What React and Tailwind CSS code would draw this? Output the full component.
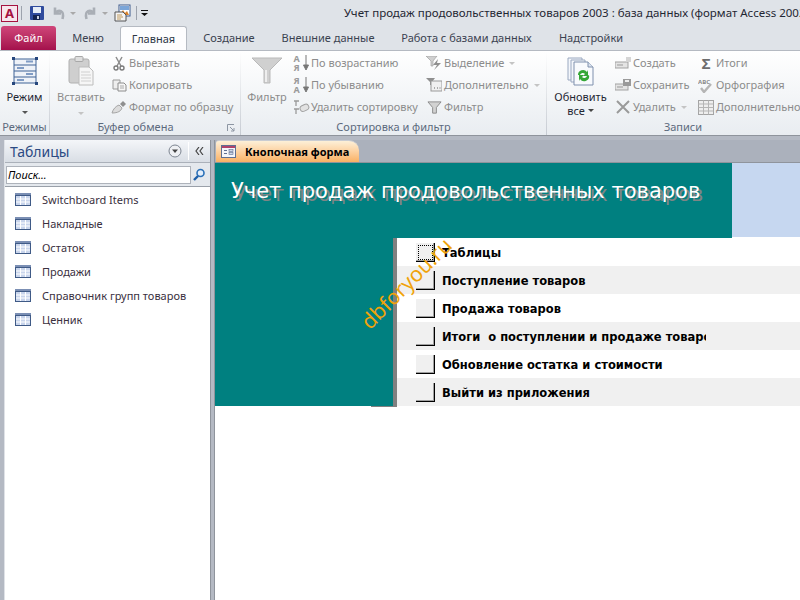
import React from "react";

const Table = () => (
  <svg width="16" height="13" viewBox="0 0 16 13" className="shrink-0">
    <rect x="0" y="0" width="16" height="13" fill="#3f5a86" />
    <rect x="1" y="3" width="14" height="9" fill="#c9d5ec" />
    <path d="M1 6h14M1 9h14M5.5 3v9M10.5 3v9" stroke="#fff" strokeWidth="1" />
    <rect x="0" y="0" width="16" height="2" fill="#7b8fb4" />
  </svg>
);

const Dropdown = ({ c = "#a9a9a9" }) => (
  <svg width="6" height="3" viewBox="0 0 6 3" className="shrink-0 block"><path d="M0 0h6L3 3z" fill={c} /></svg>
);

const Small = ({ icon, label, arrow }) => (
  <div className="h-[22px] flex items-center whitespace-nowrap">
    <span className="w-[18px] h-[16px] flex items-center justify-center shrink-0">{icon}</span>
    <span className="ml-[1px] text-[#8c8c8c]">{label}</span>
    {arrow && <span className="ml-[5px]"><Dropdown c="#c4c4c4" /></span>}
  </div>
);

const Funnel = ({ s = 16, c = "#a8a8a8" }) => (
  <svg width={s} height={s} viewBox="0 0 16 16"><path d="M1 2h14L10 8v6H6V8z" fill="#d2d2d2" stroke={c} strokeWidth="1" /></svg>
);

const SortAZ = ({ down }) => (
  <span className="relative w-[15px] h-[16px] block">
    <span className="absolute left-0 top-[-1px] text-[9px] leading-[9px] text-[#9a9a9a] font-bold">{down ? "Я" : "А"}<br />{down ? "А" : "Я"}</span>
    <svg width="6" height="16" viewBox="0 0 6 16" className="absolute right-0 top-0"><path d="M3 0v12M0.5 10L3 15l2.500-5z" stroke="#777" fill="#777" strokeWidth="1" /></svg>
  </span>
);

const GroupLabel = ({ children, dlg, extra = "" }) => (
  <div className={`h-[15px] mt-auto relative text-center text-[#5c6a7d] whitespace-nowrap ${extra}`}>
    {children}
    {dlg && (
      <svg width="8" height="8" viewBox="0 0 8 8" className="absolute right-[5px] top-[4px]">
        <path d="M0.500 7V.5H7" fill="none" stroke="#8d96a3" /><path d="M3 3l4 4M4 7h3V4" fill="none" stroke="#8d96a3" />
      </svg>
    )}
  </div>
);

const Tab = ({ children, w }) => (
  <div className={`flex items-center justify-center text-[#3b4250] ${w}`}>{children}</div>
);

const Sep = () => <div className="w-[1px] h-[85px] bg-gradient-to-b from-[#ffffff] to-[#c6cbd2] shrink-0" />;

const Btn = () => (
  <div className="w-[19px] h-[19px] bg-[#f0f0f0] border-r border-b border-r-black border-b-black shadow-[inset_-1px_-1px_0_#a0a0a0]" />
);

const rows = [
  "Таблицы",
  "Поступление товаров",
  "Продажа товаров",
  "Итоги  о поступлении и продаже товаров",
  "Обновление остатка и стоимости",
  "Выйти из приложения",
];

const navItems = ["Switchboard Items", "Накладные", "Остаток", "Продажи", "Справочник групп товаров", "Ценник"];

export default function App() {
  return (
    <div className="w-[800px] h-[600px] overflow-hidden flex flex-col bg-[#b4b9c3] text-[11px] leading-[14px] text-[#3b4250] relative" style={{ fontFamily: '"Noto Sans", sans-serif' }}>
      {/* title bar */}
      <div className="h-[26px] bg-[#dfe3e8] flex items-center shrink-0 whitespace-nowrap overflow-hidden">
        <div className="ml-[1px] w-[17px] h-[17px] shrink-0 border border-[#a5123f] bg-[#f7e6ec] flex items-center justify-center font-bold text-[13px] text-[#a5123f]" >A</div>
        <div className="ml-[3px] w-[1px] h-[14px] bg-[#9da3ad] shrink-0" />
        <svg width="16" height="16" viewBox="0 0 16 16" className="ml-[7px] shrink-0">
          <rect x="1" y="1" width="14" height="14" rx="1" fill="#2f4b9d" />
          <rect x="4" y="2" width="8" height="6" fill="#e6edf7" />
          <rect x="4" y="10" width="7" height="5" fill="#14234f" />
          <rect x="8" y="11" width="2" height="3" fill="#c8d0e0" />
        </svg>
        <svg width="14" height="14" viewBox="0 0 14 14" className="ml-[7px] shrink-0"><path d="M3 1.500v6h6M3.500 7C6 3 13 4 10.500 13" fill="none" stroke="#a9aeb5" strokeWidth="2.6" /></svg>
        <span className="ml-[4px] shrink-0"><Dropdown /></span>
        <svg width="14" height="14" viewBox="0 0 14 14" className="ml-[7px] shrink-0"><path d="M11 1.500v6H5M10.500 7C8 3 1 4 3.500 13" fill="none" stroke="#a9aeb5" strokeWidth="2.6" /></svg>
        <span className="ml-[5px] shrink-0"><Dropdown /></span>
        <svg width="17" height="18" viewBox="0 0 17 18" className="ml-[6px] shrink-0">
          <rect x="5" y="1" width="11" height="11" fill="#fff" stroke="#3c5a8c" />
          <path d="M6 11l3-5 2 3 2-2 2 4z" fill="#d9822b" /><rect x="6" y="2" width="9" height="4" fill="#7aa5d8" />
          <path d="M1 8h8l3 3v6H1z" fill="#f4f4f4" stroke="#555" />
          <path d="M3 11h5M3 13h6M3 15h4" stroke="#c09a5c" />
        </svg>
        <div className="ml-[5px] w-[1px] h-[14px] bg-[#9da3ad] shrink-0" />
        <svg width="7" height="6" viewBox="0 0 7 6" className="ml-[4px] shrink-0"><path d="M0 0h7v1H0zM0 3h7L3.500 6z" fill="#111" /></svg>
        <div className="ml-[196px] shrink-0 text-[11.5px] text-[#1f2733]">Учет продаж продовольственных товаров 2003 : база данных (формат Access 2002 - 2003)</div>
      </div>
      {/* tabs */}
      <div className="h-[24px] bg-[#dfe3e8] flex shrink-0 pl-[1px] whitespace-nowrap">
        <div className="w-[55px] bg-gradient-to-b from-[#d0457a] to-[#a40f4c] rounded-t-[3px] flex items-center justify-center text-white">Файл</div>
        <Tab w="w-[64px]">Меню</Tab>
        <div className="w-[67px] h-[24px] bg-[#fdfdfe] border border-b-0 border-[#b5bac2] rounded-t-[3px] flex items-center justify-center text-[#2c3644]">Главная</div>
        <Tab w="w-[84px]">Создание</Tab>
        <Tab w="w-[114px]">Внешние данные</Tab>
        <Tab w="w-[163px]">Работа с базами данных</Tab>
        <Tab w="w-[86px]">Надстройки</Tab>
      </div>
      {/* ribbon */}
      <div className="h-[86px] shrink-0 flex bg-gradient-to-b from-[#ffffff] to-[#e9edf1] border-t border-t-[#b5bac2] border-b border-b-[#8f949c] whitespace-nowrap overflow-hidden">
        {/* Режимы */}
        <div className="w-[49px] flex flex-col shrink-0">
          <div className="flex flex-col items-center pt-[6px]">
            <svg width="26" height="28" viewBox="0 0 26 28">
              <rect x="2" y="2" width="22" height="24" fill="#eef2f8" stroke="#3f6296" />
              <path d="M2 8h22M2 14h22M2 20h22" stroke="#3f6296" />
              <path d="M14 4.500h7M5 11h7M14 17h7M5 23h7" stroke="#7f9bc4" strokeWidth="2" />
              <g fill="#27477d"><rect x="0" y="0" width="3" height="3" /><rect x="23" y="0" width="3" height="3" /><rect x="0" y="25" width="3" height="3" /><rect x="23" y="25" width="3" height="3" /></g>
            </svg>
            <div className="mt-[5px] text-[#1f2733]">Режим</div>
            <div className="mt-[7px]"><Dropdown c="#555" /></div>
          </div>
          <GroupLabel>Режимы</GroupLabel>
        </div>
        <Sep />
        {/* Буфер обмена */}
        <div className="w-[190px] flex flex-col shrink-0">
          <div className="flex">
            <div className="w-[60px] pl-[2px] flex flex-col items-center pt-[5px] text-[#8c8c8c] shrink-0">
              <svg width="26" height="30" viewBox="0 0 26 30">
                <rect x="1" y="3" width="20" height="24" rx="2" fill="#cfcfcf" stroke="#b0b0b0" />
                <rect x="7" y="0.5" width="8" height="5" rx="1" fill="#dedede" stroke="#a8a8a8" />
                <path d="M11 11h10l4 4v14H11z" fill="#f6f6f6" stroke="#bcbcbc" />
                <path d="M13 16h9M13 19h10M13 22h10M13 25h10" stroke="#d0d0d0" />
              </svg>
              <div className="mt-[4px]">Вставить</div>
              <div className="mt-[8px]"><Dropdown c="#c4c4c4" /></div>
            </div>
            <div className="pt-[1px]">
              <Small label="Вырезать" icon={<svg width="12" height="15" viewBox="0 0 12 15"><path d="M3 1l5 9M9 1L4 10" stroke="#8d8d8d" strokeWidth="1.5" /><circle cx="3" cy="12" r="2" fill="none" stroke="#7a7a7a" strokeWidth="1.4" /><circle cx="9" cy="12" r="2" fill="none" stroke="#7a7a7a" strokeWidth="1.4" /></svg>} />
              <Small label="Копировать" icon={<svg width="15" height="13" viewBox="0 0 15 13"><path d="M1 1h7v9H1z" fill="#eee" stroke="#9a9a9a" /><path d="M6 4h6l2 2v6H6z" fill="#f6f6f6" stroke="#8c8c8c" /><path d="M8 7h4M8 9h4" stroke="#aaa" /></svg>} />
              <Small label="Формат по образцу" icon={<svg width="16" height="14" viewBox="0 0 16 14"><path d="M1 13C2 9 5 6 8 5l3 3c-1 3-4 5-10 5z" fill="#dcdcdc" stroke="#a5a5a5" /><path d="M9 4l3-3 3 3-3 3z" fill="#8f8f8f" /></svg>} />
            </div>
          </div>
          <GroupLabel dlg extra="pr-[19px]">Буфер обмена</GroupLabel>
        </div>
        <Sep />
        {/* Сортировка и фильтр */}
        <div className="w-[305px] flex flex-col shrink-0">
          <div className="flex">
            <div className="w-[50px] pl-[2px] flex flex-col items-center pt-[6px] text-[#8c8c8c] shrink-0">
              <svg width="34" height="27" viewBox="0 0 32 27"><path d="M1 1h30L19 13v13h-6V13z" fill="#d0d0d0" stroke="#b9b9b9" /><path d="M15 13v12" stroke="#eee" strokeWidth="2" /></svg>
              <div className="mt-[6px]">Фильтр</div>
            </div>
            <div className="w-[134px] pl-[1px] pt-[1px] shrink-0">
              <Small label="По возрастанию" icon={<SortAZ />} />
              <Small label="По убыванию" icon={<SortAZ down />} />
              <Small label="Удалить сортировку" icon={<svg width="17" height="15" viewBox="0 0 17 15"><path d="M1 1h5M1 9h5M3 1v5M3 9v5" stroke="#9a9a9a" strokeWidth="1.3" /><rect x="7" y="5" width="9" height="6" rx="3" transform="rotate(-25 11 8)" fill="#e2e2e2" stroke="#a0a0a0" /></svg>} />
            </div>
            <div className="pt-[1px]">
              <Small arrow label="Выделение" icon={<svg width="16" height="14" viewBox="0 0 16 14"><path d="M0 0h11L7 5v5H5V5z" fill="#d0d0d0" stroke="#a0a0a0" strokeWidth=".7" /><path d="M12 3L7 9h4l-3 5 7-7h-4z" fill="#8f8f8f" /></svg>} />
              <Small arrow label="Дополнительно" icon={<svg width="16" height="14" viewBox="0 0 16 14"><path d="M0 0h9L6 4v3H4V4z" fill="#8f8f8f" /><rect x="5" y="3" width="11" height="10" fill="#f0f0f0" stroke="#9a9a9a" /><path d="M8 10h1M11 10h1M13.500 10h1" stroke="#666" /></svg>} />
              <Small label="Фильтр" icon={<Funnel s={15} c="#8a8a8a" />} />
            </div>
          </div>
          <GroupLabel>Сортировка и фильтр</GroupLabel>
        </div>
        <Sep />
        {/* Записи */}
        <div className="flex-1 flex flex-col min-w-0">
          <div className="flex">
            <div className="w-[67px] flex flex-col items-center pt-[6px] text-[#1f2733] shrink-0 leading-[13px]">
              <svg width="28" height="29" viewBox="0 0 28 29">
                <path d="M1 1h14v22H1z" fill="#f3f6fb" stroke="#9aa8c0" />
                <path d="M4 3h14v22H4z" fill="#f3f6fb" stroke="#9aa8c0" />
                <path d="M7 5h14l5 5v18H7z" fill="#f8fafd" stroke="#7e90ad" />
                <path d="M21 5v5h5" fill="#dbe3ef" stroke="#7e90ad" />
                <path d="M11 18a5 5 0 0 1 9-3l1-2v6h-5l2-2a3 3 0 0 0-5 1z" fill="#35a737" />
                <path d="M22 18a5 5 0 0 1-9 4l-1 2v-6h5l-2 2a3 3 0 0 0 5-1z" fill="#35a737" />
              </svg>
              <div className="mt-[4px]">Обновить</div>
              <div className="mt-[1px] flex items-center gap-[3px]">все <Dropdown c="#444" /></div>
            </div>
            <div className="w-[83px] pt-[1px] shrink-0">
              <Small label="Создать" icon={<svg width="16" height="12" viewBox="0 0 16 12"><rect x="0" y="5" width="13" height="6" fill="#e4e4e4" stroke="#a2a2a2" /><path d="M2 8h6" stroke="#999" /><path d="M11 0h5v5h-5z" fill="#d5d5d5" /></svg>} />
              <Small label="Сохранить" icon={<svg width="16" height="12" viewBox="0 0 16 12"><rect x="0" y="5" width="13" height="6" fill="#e4e4e4" stroke="#a2a2a2" /><path d="M2 8h6" stroke="#999" /><rect x="8" y="0" width="8" height="7" fill="#9a9a9a" /><rect x="10" y="1" width="4" height="2" fill="#eee" /></svg>} />
              <Small arrow label="Удалить" icon={<svg width="14" height="14" viewBox="0 0 14 14"><path d="M1 1l12 12M13 1L1 13" stroke="#9a9a9a" strokeWidth="2" /></svg>} />
            </div>
            <div className="pt-[1px]">
              <Small label="Итоги" icon={<span className="text-[15px] font-bold text-[#6d6d6d] leading-[15px]">Σ</span>} />
              <Small label="Орфография" icon={<svg width="16" height="15" viewBox="0 0 16 15"><text x="0" y="6" fontSize="6" fontWeight="700" fill="#8a8a8a">ABC</text><path d="M3 10l3 4 7-8" fill="none" stroke="#b5b5b5" strokeWidth="2.4" /></svg>} />
              <Small label="Дополнительно" icon={<svg width="16" height="15" viewBox="0 0 16 15"><rect x=".5" y=".5" width="15" height="14" fill="#eee" stroke="#a4a4a4" /><path d="M.5 4h15M.5 7.500h15M.5 11h15M5.500 .5v14M10.500 .5v14" stroke="#b5b5b5" /></svg>} />
            </div>
          </div>
          <GroupLabel extra="pl-[19px]">Записи</GroupLabel>
        </div>
      </div>
      {/* body */}
      <div className="flex-1 min-h-0 flex pt-[4px] pl-[4px]">
        {/* nav */}
        <div className="w-[207px] flex flex-col shrink-0 bg-white border-r border-r-[#8f949c] border-l border-l-[#dfe2e7]">
          <div className="h-[23px] bg-gradient-to-b from-[#f4f6f9] to-[#d9dee5] border-b border-b-[#aab0b9] flex items-center shrink-0">
            <span className="ml-[5px] mt-[2px] text-[14px] text-[#2b4a83]">Таблицы</span>
            <svg width="14" height="14" viewBox="0 0 14 14" className="ml-auto mr-[6px]"><circle cx="7" cy="7" r="6" fill="#eef0f3" stroke="#7c8490" /><path d="M4 5.500h6L7 9z" fill="#444" /></svg>
            <div className="w-[1px] h-[18px] bg-white" />
            <svg width="9" height="8" viewBox="0 0 9 8" className="mx-[6px]"><path d="M4 0L1 4l3 4M8 0L5 4l3 4" fill="none" stroke="#444" strokeWidth="1.2" /></svg>
          </div>
          <div className="h-[24px] bg-[#e4e8ed] border-b border-b-[#9aa0a9] flex items-center shrink-0 pl-[1px]">
            <div className="w-[185px] h-[18px] bg-white border border-[#aeb3bb] flex items-center pl-[1px] italic text-black">Поиск...</div>
            <svg width="14" height="14" viewBox="0 0 14 14" className="ml-[1px]"><circle cx="8.500" cy="5" r="3.500" fill="#e3eefb" stroke="#2a70b8" strokeWidth="1.6" /><path d="M6 8l-4 4" stroke="#1c5ea8" strokeWidth="2.4" /></svg>
          </div>
          <div className="pt-[1px]">
            {navItems.map((t) => (
              <div key={t} className="h-[24px] flex items-center whitespace-nowrap">
                <span className="ml-[10px] -mt-[2px]"><Table /></span>
                <span className="ml-[11px] text-[#3a3040]">{t}</span>
              </div>
            ))}
          </div>
        </div>
        <div className="w-[3px] shrink-0" />
        {/* main */}
        <div className="flex-1 min-w-0 flex flex-col border-l border-l-[#8f949c]">
          <div className="h-[23px] shrink-0 bg-[#abb1bc] flex items-end pl-[1px] border-b border-b-[#8f949c]">
            <div className="w-[143px] h-[22px] bg-gradient-to-b from-[#fdf0d8] to-[#f9b163] rounded-tl-[3px] rounded-tr-[10px] border-t border-t-[#c9ccd2] flex items-center pl-[5px] font-bold text-[11px] text-black whitespace-nowrap">
              <svg width="15" height="13" viewBox="0 0 15 13" className="shrink-0"><rect x=".5" y=".5" width="14" height="12" fill="#f4f5fa" stroke="#5e6f92" /><rect x="1" y="1" width="13" height="2" fill="#b0426a" /><path d="M3 5.500h3M3 8.500h3" stroke="#5e6f92" /><rect x="8" y="4.500" width="4" height="2" fill="#cfd8e8" stroke="#5e6f92" strokeWidth=".6" /><rect x="8" y="7.500" width="4" height="2" fill="#cfd8e8" stroke="#5e6f92" strokeWidth=".6" /></svg>
              <span className="ml-[9px]">Кнопочная форма</span>
            </div>
          </div>
          <div className="flex-1 bg-white min-h-0 flex flex-col">
            {/* form header */}
            <div className="h-[75px] flex shrink-0">
              <div className="w-[517px] bg-[#008080] pl-[16px] pt-[14px] shrink-0 whitespace-nowrap text-[21px] leading-[28px] text-white [text-shadow:3px_3px_0_#7f8585]" style={{ fontFamily: '"DejaVu Sans", sans-serif' }}>
                Учет продаж продовольственных товаров
              </div>
              <div className="flex-1 bg-[#c6d7f0] mb-[1px]" />
            </div>
            {/* detail */}
            <div className="h-[168px] flex shrink-0 relative">
              <div className="w-[178px] bg-[#008080] shrink-0" />
              <div className="w-[4px] bg-[#808080] shrink-0" />
              <div className="flex-1 min-w-0">
                {rows.map((t, i) => (
                  <div key={t} className={`h-[28px] flex items-center pl-[19px] ${i % 2 ? "bg-[#f0f0f0]" : "bg-white"}`}>
                    <div className="relative shrink-0">
                      <Btn />
                      {i === 0 && <div className="absolute inset-[2px] border border-dotted border-black" />}
                    </div>
                    <div className="ml-[7px] mt-[2px] w-[264px] overflow-hidden whitespace-pre font-bold text-[11.5px] text-black" style={{ fontFamily: '"DejaVu Sans", sans-serif' }}>{t}</div>
                  </div>
                ))}
              </div>
              <div className="absolute left-[131px] top-[33px] w-[120px] text-center text-[21px] leading-[24px] text-[#f0a30a] -rotate-45 whitespace-nowrap pointer-events-none" style={{ fontFamily: '"Noto Sans", sans-serif' }}>dbforyou.ru</div>
            </div>
            <div className="h-[1px] w-[26px] ml-[156px] bg-[#808080]" />
          </div>
        </div>
      </div>
    </div>
  );
}
